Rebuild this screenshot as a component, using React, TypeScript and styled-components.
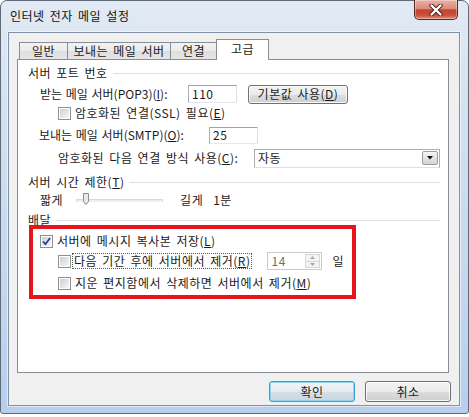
import * as React from 'react';
import styled, { createGlobalStyle } from 'styled-components';

const GlobalStyle = createGlobalStyle`
  body {
    margin: 0;
    background: #ffffff;
    font-family: 'Noto Sans CJK KR', 'Liberation Sans', sans-serif;
    font-size: 12px;
    line-height: 16px;
    letter-spacing: 0.5px;
    word-spacing: 2px;
    color: #1b1b1b;
  }
`;

const Window = styled.div`
  width: 469px;
  height: 414px;
  box-sizing: border-box;
  display: flex;
  flex-direction: column;
  padding: 0 8px 7px 7px;
  border: 1px solid #5f6b79;
  border-radius: 7px 7px 3px 3px;
  background: linear-gradient(180deg, #e1eaf4 0%, #d3e0ef 30%, #c3d7ee 70%, #b7cfec 100%);
`;

const TitleBar = styled.div`
  height: 31px;
  display: flex;
  align-items: center;
  justify-content: space-between;
  padding-left: 2px;
`;

const Title = styled.span`
  color: #111;
  margin-top: -2px;
`;

const CloseButton = styled.div`
  align-self: flex-start;
  width: 44px;
  height: 20px;
  margin: -1px 2px 0 0;
  box-sizing: border-box;
  display: flex;
  align-items: center;
  justify-content: center;
  border: 1px solid #5a2620;
  border-top: none;
  border-radius: 0 0 5px 5px;
  background: linear-gradient(180deg, #eab2a7 0%, #dc8a78 45%, #c4422f 52%, #c9503b 80%, #e0907a 100%);
  box-shadow: inset 0 0 0 1px rgba(255, 255, 255, 0.35);
`;

const Client = styled.div`
  flex: 1;
  display: flex;
  flex-direction: column;
  padding: 6px 10px 3px 8px;
  background: #f0f0f0;
  border: 1px solid #8292a6;
  box-shadow: 0 0 0 1px rgba(255, 255, 255, 0.55);
`;

const TabRow = styled.div`
  height: 20px;
  display: flex;
  align-items: flex-end;
  padding-left: 2px;
`;

const Tab = styled.div<{ $w: number; $active?: boolean }>`
  width: ${(p) => p.$w}px;
  height: ${(p) => (p.$active ? 21 : 17)}px;
  box-sizing: border-box;
  margin-left: -1px;
  margin-bottom: ${(p) => (p.$active ? -1 : 0)}px;
  display: flex;
  align-items: center;
  justify-content: center;
  padding-bottom: ${(p) => (p.$active ? 3 : 0)}px;
  border: 1px solid #898c95;
  border-bottom: none;
  background: ${(p) =>
    p.$active ? '#ffffff' : 'linear-gradient(180deg, #f3f3f3 0%, #ebebeb 50%, #dedede 51%, #e6e6e6 100%)'};
  position: relative;
  z-index: ${(p) => (p.$active ? 2 : 1)};

  &:first-child {
    margin-left: 0;
  }
`;

const Panel = styled.div`
  flex: 1;
  display: flex;
  flex-direction: column;
  padding: 5px 8px 0 10px;
  background: #ffffff;
  border: 1px solid #898c95;
`;

const SectionHeader = styled.div<{ $mt?: number }>`
  height: 16px;
  margin-top: ${(p) => p.$mt ?? 0}px;
  display: flex;
  align-items: center;
`;

const SectionLine = styled.div`
  flex: 1;
  height: 1px;
  margin-left: 5px;
  background: #d5dfe5;
`;

const Row = styled.div<{ $h: number; $mt?: number; $pl?: number }>`
  height: ${(p) => p.$h}px;
  margin-top: ${(p) => p.$mt ?? 0}px;
  padding-left: ${(p) => p.$pl ?? 0}px;
  display: flex;
  align-items: center;
`;

const Label = styled.span<{ $w?: number; $ml?: number; $tight?: boolean }>`
  flex: none;
  width: ${(p) => (p.$w ? `${p.$w}px` : 'auto')};
  margin-left: ${(p) => p.$ml ?? 0}px;
  white-space: nowrap;
  letter-spacing: ${(p) => (p.$tight ? '0' : 'inherit')};
  word-spacing: ${(p) => (p.$tight ? '1px' : 'inherit')};
`;

const TextBox = styled.div<{ $w: number; $h: number }>`
  width: ${(p) => p.$w}px;
  height: ${(p) => p.$h}px;
  box-sizing: border-box;
  flex: none;
  display: flex;
  align-items: center;
  padding-left: 3px;
  background: #ffffff;
  border: 1px solid #abadb3;
  border-top-color: #9ea2ab;
  border-bottom-color: #e3e9ef;
  border-right-color: #dbdfe6;
`;

const PushButton = styled.div<{ $w: number; $h: number; $ml?: number; $default?: boolean }>`
  width: ${(p) => p.$w}px;
  height: ${(p) => p.$h}px;
  margin-left: ${(p) => p.$ml ?? 0}px;
  box-sizing: border-box;
  flex: none;
  display: flex;
  align-items: center;
  justify-content: center;
  border-radius: 3px;
  border: 1px solid ${(p) => (p.$default ? '#3c9fd0' : '#707070')};
  background: ${(p) =>
    p.$default
      ? 'linear-gradient(180deg, #f1f5f8 0%, #e3ebf1 50%, #d3dfe8 51%, #cad7e2 100%)'
      : 'linear-gradient(180deg, #f2f2f2 0%, #ebebeb 50%, #dddddd 51%, #cfcfcf 100%)'};
  box-shadow: inset 0 0 0 1px ${(p) => (p.$default ? '#8fd6f5' : 'rgba(255,255,255,0.8)')};
`;

const CheckBoxOuter = styled.span`
  width: 13px;
  height: 13px;
  box-sizing: border-box;
  flex: none;
  padding: 1px;
  border: 1px solid #8e8f8f;
  background: #ffffff;
  position: relative;
`;

const CheckBoxInner = styled.span`
  display: block;
  width: 9px;
  height: 9px;
  background: linear-gradient(135deg, #cbcfd5 0%, #e6e7e9 60%, #f6f6f6 100%);
`;

const CheckMark = styled.svg`
  position: absolute;
  left: 1px;
  top: 1px;
`;

const CheckText = styled.span<{ $focus?: boolean }>`
  margin-left: ${(p) => (p.$focus ? 1 : 2)}px;
  padding: 0 1px;
  white-space: nowrap;
  border: 1px ${(p) => (p.$focus ? 'dotted #555' : 'solid transparent')};
  line-height: 14px;
`;

const Select = styled.div`
  width: 186px;
  height: 19px;
  box-sizing: border-box;
  flex: none;
  display: flex;
  align-items: center;
  justify-content: space-between;
  padding: 0 1px 0 3px;
  background: #ffffff;
  border: 1px solid #abadb3;
  border-bottom-color: #dbdfe6;
`;

const DropButton = styled.div`
  width: 16px;
  height: 14px;
  box-sizing: border-box;
  display: flex;
  align-items: center;
  justify-content: center;
  border: 1px solid #9c9c9c;
  border-radius: 2px;
  background: linear-gradient(180deg, #f6f6f6 0%, #e4e4e4 50%, #d4d4d4 100%);
`;

const Slider = styled.div`
  width: 87px;
  height: 16px;
  margin-left: 13px;
  flex: none;
  position: relative;
  display: flex;
  align-items: center;
`;

const Track = styled.div`
  width: 100%;
  height: 3px;
  box-sizing: border-box;
  background: #eceeee;
  border: 1px solid #dadada;
  border-bottom-color: #f0f0f0;
`;

const Thumb = styled.svg`
  position: absolute;
  left: 7px;
  top: 1px;
`;

const Highlight = styled.div`
  width: 327px;
  box-sizing: border-box;
  margin: -3px 0 0 1px;
  padding: 4px 0 4px 7px;
  border: 4px solid #e8141c;
  position: relative;
  z-index: 1;
  display: flex;
  flex-direction: column;
`;

const Spinner = styled.div`
  width: 55px;
  height: 18px;
  margin-left: 15px;
  box-sizing: border-box;
  flex: none;
  display: flex;
  align-items: center;
  justify-content: space-between;
  padding: 0 1px 0 3px;
  color: #6d6d6d;
  background: #ffffff;
  border: 1px solid #c9cbcf;
`;

const SpinButtons = styled.div`
  width: 15px;
  height: 14px;
  display: flex;
  flex-direction: column;
`;

const SpinHalf = styled.div`
  flex: 1;
  box-sizing: border-box;
  display: flex;
  align-items: center;
  justify-content: center;
  border: 1px solid #d7d7d7;
  background: #f4f4f4;

  & + & {
    border-top: none;
  }
`;

const ButtonRow = styled.div`
  height: 21px;
  margin: 8px -2px 0 0;
  display: flex;
  justify-content: flex-end;
`;

const CheckBox: React.FC<{ checked?: boolean }> = ({ checked }) => (
  <CheckBoxOuter>
    <CheckBoxInner />
    {checked && (
      <CheckMark width="9" height="9" viewBox="0 0 9 9">
        <path d="M1 4.5 L3.5 7.2 L8 1" fill="none" stroke="#24429b" strokeWidth="1.8" />
      </CheckMark>
    )}
  </CheckBoxOuter>
);

const Tri: React.FC<{ up?: boolean; color: string; w?: number }> = ({ up, color, w = 7 }) => (
  <svg width={w} height={w / 2 + 0.5} viewBox={`0 0 ${w} ${w / 2 + 0.5}`}>
    <path
      d={up ? `M0 ${w / 2 + 0.5} L${w / 2} 0 L${w} ${w / 2 + 0.5}Z` : `M0 0 L${w} 0 L${w / 2} ${w / 2 + 0.5}Z`}
      fill={color}
    />
  </svg>
);

const Section: React.FC<{ mt?: number; children: React.ReactNode }> = ({ mt, children }) => (
  <SectionHeader $mt={mt}>
    <Label>{children}</Label>
    <SectionLine />
  </SectionHeader>
);

const App: React.FC = () => (
  <>
    <GlobalStyle />
    <Window>
      <TitleBar>
        <Title>인터넷 전자 메일 설정</Title>
        <CloseButton>
          <svg width="14" height="12" viewBox="0 0 14 12">
            <path d="M2.5 1.5 L11.5 10.5 M11.5 1.5 L2.5 10.5" stroke="#4a1c18" strokeWidth="4.2" strokeLinecap="round" />
            <path d="M2.5 1.5 L11.5 10.5 M11.5 1.5 L2.5 10.5" stroke="#ffffff" strokeWidth="2.4" strokeLinecap="round" />
          </svg>
        </CloseButton>
      </TitleBar>
      <Client>
        <TabRow>
          <Tab $w={49}>일반</Tab>
          <Tab $w={104}>보내는 메일 서버</Tab>
          <Tab $w={47}>연결</Tab>
          <Tab $w={53} $active>
            고급
          </Tab>
        </TabRow>
        <Panel>
          <Section>서버 포트 번호</Section>
          <Row $h={20} $mt={3} $pl={12}>
            <Label $w={148} $tight>
              받는 메일 서버(POP3)(<u>I</u>):
            </Label>
            <TextBox $w={49} $h={18}>110</TextBox>
            <PushButton $w={100} $h={19} $ml={11}>
              기본값 사용(<u>D</u>)
            </PushButton>
          </Row>
          <Row $h={16} $mt={1} $pl={30}>
            <CheckBox />
            <CheckText>
              암호화된 연결(SSL) 필요(<u>E</u>)
            </CheckText>
          </Row>
          <Row $h={18} $mt={5} $pl={11}>
            <Label $w={170} $tight>
              보내는 메일 서버(SMTP)(<u>O</u>):
            </Label>
            <TextBox $w={49} $h={17}>25</TextBox>
          </Row>
          <Row $h={20} $mt={4} $pl={30}>
            <Label $w={196}>
              암호화된 다음 연결 방식 사용(<u>C</u>):
            </Label>
            <Select>
              <span>자동</span>
              <DropButton>
                <Tri color="#111" w={6} />
              </DropButton>
            </Select>
          </Row>
          <Section mt={6}>
            서버 시간 제한(<u>T</u>)
          </Section>
          <Row $h={16} $mt={2} $pl={12}>
            <Label>짧게</Label>
            <Slider>
              <Track />
              <Thumb width="6" height="12" viewBox="0 0 6 12">
                <path d="M0.5 0.5 H5.5 V8.5 L3 11.5 L0.5 8.5 Z" fill="#e9e9e9" stroke="#8c8c8c" />
              </Thumb>
            </Slider>
            <Label $ml={17}>길게</Label>
            <Label $ml={10}>1분</Label>
          </Row>
          <Section mt={4}>배달</Section>
          <Highlight>
            <Row $h={16}>
              <CheckBox checked />
              <CheckText>
                서버에 메시지 복사본 저장(<u>L</u>)
              </CheckText>
            </Row>
            <Row $h={20} $mt={2} $pl={18}>
              <CheckBox />
              <CheckText $focus>
                다음 기간 후에 서버에서 제거(<u>R</u>)
              </CheckText>
              <Spinner>
                <span>14</span>
                <SpinButtons>
                  <SpinHalf>
                    <Tri up color="#a8a8a8" w={5} />
                  </SpinHalf>
                  <SpinHalf>
                    <Tri color="#a8a8a8" w={5} />
                  </SpinHalf>
                </SpinButtons>
              </Spinner>
              <Label $ml={10}>일</Label>
            </Row>
            <Row $h={16} $mt={4} $pl={18}>
              <CheckBox />
              <CheckText>
                지운 편지함에서 삭제하면 서버에서 제거(<u>M</u>)
              </CheckText>
            </Row>
          </Highlight>
        </Panel>
        <ButtonRow>
          <PushButton $w={86} $h={21} $default>
            확인
          </PushButton>
          <PushButton $w={86} $h={21} $ml={10}>
            취소
          </PushButton>
        </ButtonRow>
      </Client>
    </Window>
  </>
);

export default App;
